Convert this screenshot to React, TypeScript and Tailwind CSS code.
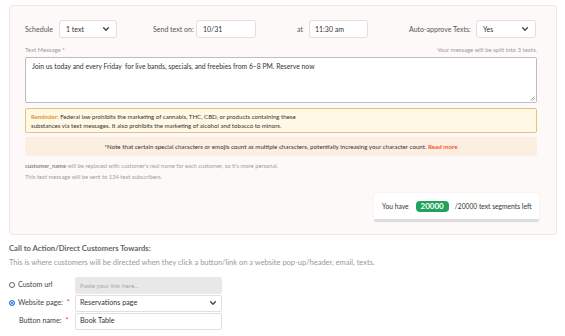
import React from "react";

const Chevron = () => (
  <svg width="8" height="8" viewBox="0 0 10 10" className="shrink-0">
    <path d="M2 3.5 L5 6.5 L8 3.5" fill="none" stroke="#444" strokeWidth="1.6" strokeLinecap="round" strokeLinejoin="round" />
  </svg>
);

export default function App() {
  return (
    <div className="w-[565px] h-[336px] bg-white overflow-hidden text-[#444] whitespace-nowrap" style={{ fontFamily: "Lato, 'Open Sans', sans-serif" }}>
      <div className="ml-[9px] mt-[5px] w-[548px] h-[230px] rounded-[3px] border border-[#f1e6e2] bg-[#fdf9f8] pl-[15px] pr-[19px] pt-[14px]">
        {/* row 1 */}
        <div className="flex items-center h-[18px] text-[7px] text-[#555]">
          <span className="w-[34px]">Schedule</span>
          <div className="w-[58px] h-[18px] rounded-[3px] border border-[#e9dcd8] bg-white flex items-center justify-between px-[6px] text-[#333]">
            <span>1 text</span>
            <Chevron />
          </div>
          <span className="ml-[36px] w-[43px]">Send text on:</span>
          <div className="w-[60px] h-[18px] rounded-[3px] border border-[#e9dcd8] bg-white flex items-center px-[6px] text-[#333]">10/31</div>
          <span className="ml-[41px] w-[12px]">at</span>
          <div className="w-[59px] h-[18px] rounded-[3px] border border-[#e9dcd8] bg-white flex items-center px-[5px] text-[#333]">11:30 am</div>
          <span className="ml-[41px] w-[67px]">Auto-approve Texts:</span>
          <div className="w-[60px] h-[18px] rounded-[3px] border border-[#e9dcd8] bg-white flex items-center justify-between px-[6px] text-[#333]">
            <span>Yes</span>
            <Chevron />
          </div>
        </div>
        {/* text message label */}
        <div className="mt-[6px] flex justify-between items-center text-[6px] text-[#999] h-[10px]">
          <span>Text Message <span className="text-[#e53935]">*</span></span>
          <span>Your message will be split into 3 texts.</span>
        </div>
        <div className="relative mt-[3px] h-[46px] rounded-[2px] border border-[#bdbdbd] bg-white px-[6px] pt-[3px] text-[6.8px] text-[#333]">
          Join us today and every Friday&nbsp; for live bands, specials, and freebies from 6–8 PM. Reserve now
          <svg className="absolute right-[1px] bottom-[1px]" width="5" height="5" viewBox="0 0 5 5">
            <path d="M4.5 0.5 L0.5 4.5 M4.5 2.5 L2.5 4.5" stroke="#777" strokeWidth="0.7" />
          </svg>
        </div>
        <div className="mt-[5px] h-[25px] rounded-[2px] border border-[#e6c27a] bg-[#fff8e4] px-[5px] pt-[3px] text-[6.1px] leading-[9px] text-[#333]">
          <span className="font-bold text-[#d69a2d]">Reminder:</span> Federal law prohibits the marketing of cannabis, THC, CBD, or products containing these<br />
          substances via text messages. It also prohibits the marketing of alcohol and tobacco to minors.
        </div>
        <div className="mt-[4px] h-[19px] rounded-[2px] bg-[#fdeee2] flex items-center justify-center text-[6.2px] text-[#333]">
          <span>*Note that certain special characters or emojis count as multiple characters, potentially increasing your character count. <span className="font-bold text-[#f05a28]">Read more</span></span>
        </div>
        <div className="mt-[4px] text-[5.8px] text-[#a0a0a0] leading-[11px]">
          <div><span className="font-bold text-[#888]">customer_name</span> will be replaced with customer's real name for each customer, so it's more personal.</div>
          <div>This text message will be sent to 134 text subscribers.</div>
        </div>
        <div className="flex justify-end mt-[11px] -mr-[2px]">
          <div className="w-[165px] h-[29px] rounded-[3px] bg-white border-b-[3px] border-[#dcdcdc] shadow-[0_0_2px_rgba(0,0,0,0.08)] flex items-center px-[8px] text-[6.7px] text-[#333]">
            <span>You have</span>
            <span className="ml-[7px] rounded-[4px] bg-[#22a35b] px-[5px] h-[11px] leading-[11px] text-white font-bold text-[8px]">20000</span>
            <span className="ml-[6px]">/20000 text segments left</span>
          </div>
        </div>
      </div>
      <div className="ml-[9px] mt-[8px] text-[7.7px] font-bold text-[#666]">Call to Action/Direct Customers Towards:</div>
      <div className="ml-[9px] mt-[2px] text-[7.5px] text-[#999]">This is where customers will be directed when they click a button/link on a website pop-up/header, email, texts.</div>
      <div className="ml-[9px] mt-[9px] flex flex-col gap-[1px] text-[7.2px] text-[#444]">
        <div className="flex items-center h-[17px]">
          <div className="w-[66px] flex items-center">
            <span className="w-[6px] h-[6px] rounded-full border border-[#666] bg-white" />
            <span className="ml-[3px]">Custom url</span>
          </div>
          <div className="w-[147px] h-[17px] rounded-[2px] bg-[#e8e8e8] flex items-center px-[5px] text-[6.3px] text-[#aaa]">Paste your link here...</div>
        </div>
        <div className="flex items-center h-[17px]">
          <div className="w-[66px] flex items-center">
            <span className="w-[6px] h-[6px] rounded-full bg-[#1a73e8] border border-[#1a73e8] shadow-[inset_0_0_0_1px_#fff]" />
            <span className="ml-[3px]">Website page:</span>
            <span className="ml-[4px] text-[#e53935]">*</span>
          </div>
          <div className="w-[147px] h-[17px] rounded-[2px] border border-[#e0e0e0] bg-white flex items-center justify-between px-[4px] text-[#333]">
            <span>Reservations page</span>
            <Chevron />
          </div>
        </div>
        <div className="flex items-center h-[17px]">
          <div className="w-[66px] flex items-center pl-[10px]">
            <span>Button name:</span>
            <span className="ml-[4px] text-[#e53935]">*</span>
          </div>
          <div className="w-[147px] h-[17px] rounded-[2px] border border-[#e0e0e0] bg-white flex items-center px-[4px] text-[#333]">Book Table</div>
        </div>
      </div>
    </div>
  );
}
